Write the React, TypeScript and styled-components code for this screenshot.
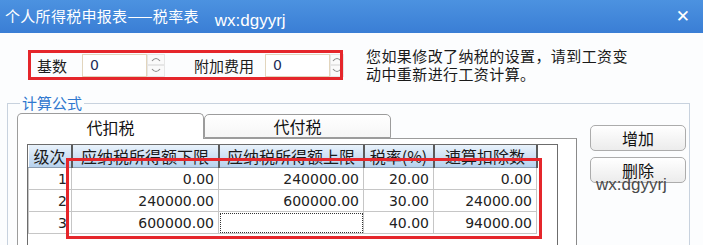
import React from 'react';
import styled, { createGlobalStyle } from 'styled-components';

const GlobalStyle = createGlobalStyle`
  html, body {
    margin: 0;
    padding: 0;
    background: #ffffff;
  }
  * {
    box-sizing: border-box;
  }
`;

const cjk = `"Noto Sans CJK SC", "Noto Sans", sans-serif`;
const num = `"DejaVu Sans", "Noto Sans CJK SC", sans-serif`;

const Window = styled.div`
  position: relative;
  width: 703px;
  height: 245px;
  overflow: hidden;
  background: #fcfdfe;
  font-family: ${cjk};
  color: #1c1c1c;
`;

const TitleBar = styled.div`
  display: flex;
  align-items: center;
  height: 33px;
  padding: 0 13px 0 5px;
  background: linear-gradient(#4c92e0, #3a7ed5);
  color: #ffffff;
`;

const Title = styled.span`
  font-size: 15px;
  letter-spacing: 0.3px;
  margin-top: -2px;
`;

const TitleMark = styled.span`
  font-family: "Liberation Sans", Arial, sans-serif;
  font-size: 17px;
  margin: 8px 0 0 16px;
`;

const CloseButton = styled.span`
  margin-left: auto;
  font-family: "DejaVu Sans", sans-serif;
  font-weight: bold;
  font-size: 17px;
  line-height: 1;
`;

const TopRow = styled.div`
  display: flex;
  align-items: center;
  height: 38px;
  margin-top: 13px;
  padding-left: 37px;
`;

const Label = styled.span<{ gap: number }>`
  font-size: 15px;
  margin-right: ${(p) => p.gap}px;
  white-space: nowrap;
`;

const NumberInput = styled.div`
  display: flex;
  align-items: center;
  width: 65px;
  height: 23px;
  padding-left: 7px;
  border: 1px solid #e2d5bd;
  background: #ffffff;
  font-family: ${num};
  font-size: 14px;
  color: #1d2b58;
`;

const Spinner = styled.div<{ w: number; after: number }>`
  display: flex;
  flex-direction: column;
  width: ${(p) => p.w}px;
  height: 23px;
  margin-right: ${(p) => p.after}px;
`;

const SpinHalf = styled.div`
  flex: 1;
  display: flex;
  align-items: center;
  justify-content: center;
  border: 1px solid #e6e6e6;
  background: #fafafa;
`;

const Notice = styled.div`
  font-size: 15px;
  line-height: 18px;
  letter-spacing: 0.4px;
  color: #1a1a1a;
`;

const Group = styled.fieldset`
  margin: 10px 13px 0 7px;
  padding: 1px 0 0 9px;
  border: 1px solid #c8d2de;
  border-bottom: none;
  height: 200px;
  min-width: 0;
`;

const Legend = styled.legend`
  margin-left: 3px;
  padding: 0 2px;
  font-size: 15px;
  line-height: 18px;
  color: #2f78cf;
`;

const GroupBody = styled.div`
  display: flex;
  align-items: flex-start;
`;

const TabArea = styled.div`
  display: flex;
  flex-direction: column;
  width: 560px;
`;

const TabStrip = styled.div`
  display: flex;
  align-items: flex-end;
  height: 25px;
`;

const Tab = styled.div<{ active?: boolean }>`
  position: relative;
  z-index: ${(p) => (p.active ? 2 : 1)};
  display: flex;
  align-items: center;
  justify-content: center;
  width: 187px;
  height: ${(p) => (p.active ? 26 : 24)}px;
  margin-bottom: ${(p) => (p.active ? -1 : 0)}px;
  border: 1px solid #9c9c9c;
  border-bottom: ${(p) => (p.active ? 'none' : '1px solid #9c9c9c')};
  border-radius: 5px 5px 0 0;
  background: ${(p) => (p.active ? '#ffffff' : 'linear-gradient(#ffffff, #f6f6f6)')};
  font-size: 16px;
  color: #111;
`;

const Panel = styled.div`
  height: 120px;
  padding: 5px 0 0 9px;
  border: 1px solid #9c9c9c;
  border-right-color: #8a8a8a;
  background: #ffffff;
`;

const GridBox = styled.div`
  width: 531px;
  height: 120px;
  border: 1px solid #6c6c6c;
  border-bottom: none;
  background: #ffffff;
`;

const Table = styled.table`
  border-collapse: collapse;
  table-layout: fixed;
`;

const HeadCell = styled.th<{ w: number }>`
  width: ${(p) => p.w}px;
  height: 22px;
  padding: 0;
  border-right: 2px solid #5a5a5a;
  border-bottom: 1px solid #8c9db0;
  background: linear-gradient(#e9f2fb, #b7d2ee);
  font-weight: normal;
  font-size: 16px;
  line-height: 22px;
  text-align: center;
  white-space: nowrap;
  overflow: hidden;
  color: #1a1a1a;
`;

const Cell = styled.td<{ focused?: boolean }>`
  height: 22px;
  padding: 0 4px 0 0;
  border: 1px solid #c6c6c6;
  border-top: none;
  font-family: ${num};
  font-size: 14px;
  text-align: right;
  color: #222;
  outline: ${(p) => (p.focused ? '1px dotted #333' : 'none')};
  outline-offset: -2px;
`;

const ButtonColumn = styled.div`
  display: flex;
  flex-direction: column;
  gap: 6px;
  margin: 12px 0 0 13px;
`;

const Button = styled.div`
  display: flex;
  align-items: center;
  justify-content: center;
  width: 96px;
  height: 26px;
  border: 1px solid #acacac;
  border-radius: 5px;
  background: linear-gradient(#ffffff, #ececec);
  font-size: 16px;
  color: #111;
`;

const RedBox = styled.div<{ x: number; y: number; w: number; h: number }>`
  position: absolute;
  left: ${(p) => p.x}px;
  top: ${(p) => p.y}px;
  width: ${(p) => p.w}px;
  height: ${(p) => p.h}px;
  border: 3px solid #e5262b;
  pointer-events: none;
`;

const Watermark = styled.div`
  position: absolute;
  left: 596px;
  top: 175px;
  font-family: "Liberation Sans", Arial, sans-serif;
  font-size: 17px;
  color: #4a4a4a;
`;

const Chevron = ({ up }: { up?: boolean }) => (
  <svg width="10" height="6" viewBox="0 0 10 6">
    <path
      d={up ? 'M1 5 Q5 0 9 5' : 'M1 1 Q5 6 9 1'}
      fill="none"
      stroke="#8d8d8d"
      strokeWidth="1.2"
    />
  </svg>
);

const columns = [
  { title: '级次', w: 43 },
  { title: '应纳税所得额下限', w: 147 },
  { title: '应纳税所得额上限', w: 145 },
  { title: '税率(%)', w: 70 },
  { title: '速算扣除数', w: 103 },
];

const rows = [
  ['1', '0.00', '240000.00', '20.00', '0.00'],
  ['2', '240000.00', '600000.00', '30.00', '24000.00'],
  ['3', '600000.00', '', '40.00', '94000.00'],
];

export default function App() {
  return (
    <Window>
      <GlobalStyle />
      <TitleBar>
        <Title>个人所得税申报表——税率表</Title>
        <TitleMark>wx:dgyyrj</TitleMark>
        <CloseButton>✕</CloseButton>
      </TitleBar>

      <TopRow>
        <Label gap={15}>基数</Label>
        <NumberInput>0</NumberInput>
        <Spinner w={18} after={29}>
          <SpinHalf><Chevron up /></SpinHalf>
          <SpinHalf><Chevron /></SpinHalf>
        </Spinner>
        <Label gap={11}>附加费用</Label>
        <NumberInput>0</NumberInput>
        <Spinner w={14} after={22}>
          <SpinHalf><Chevron up /></SpinHalf>
          <SpinHalf><Chevron /></SpinHalf>
        </Spinner>
        <Notice>
          您如果修改了纳税的设置，请到工资变
          <br />
          动中重新进行工资计算。
        </Notice>
      </TopRow>

      <Group>
        <Legend>计算公式</Legend>
        <GroupBody>
          <TabArea>
            <TabStrip>
              <Tab active>代扣税</Tab>
              <Tab>代付税</Tab>
            </TabStrip>
            <Panel>
              <GridBox>
                <Table>
                  <thead>
                    <tr>
                      {columns.map((c) => (
                        <HeadCell key={c.title} w={c.w}>{c.title}</HeadCell>
                      ))}
                    </tr>
                  </thead>
                  <tbody>
                    {rows.map((r, i) => (
                      <tr key={i}>
                        {r.map((v, j) => (
                          <Cell key={j} focused={i === 2 && j === 2}>{v}</Cell>
                        ))}
                      </tr>
                    ))}
                  </tbody>
                </Table>
              </GridBox>
            </Panel>
          </TabArea>
          <ButtonColumn>
            <Button>增加</Button>
            <Button>删除</Button>
          </ButtonColumn>
        </GroupBody>
      </Group>

      <RedBox x={28} y={50} w={315} h={30} />
      <RedBox x={66} y={158} w={476} h={81} />
      <Watermark>wx:dgyyrj</Watermark>
    </Window>
  );
}
